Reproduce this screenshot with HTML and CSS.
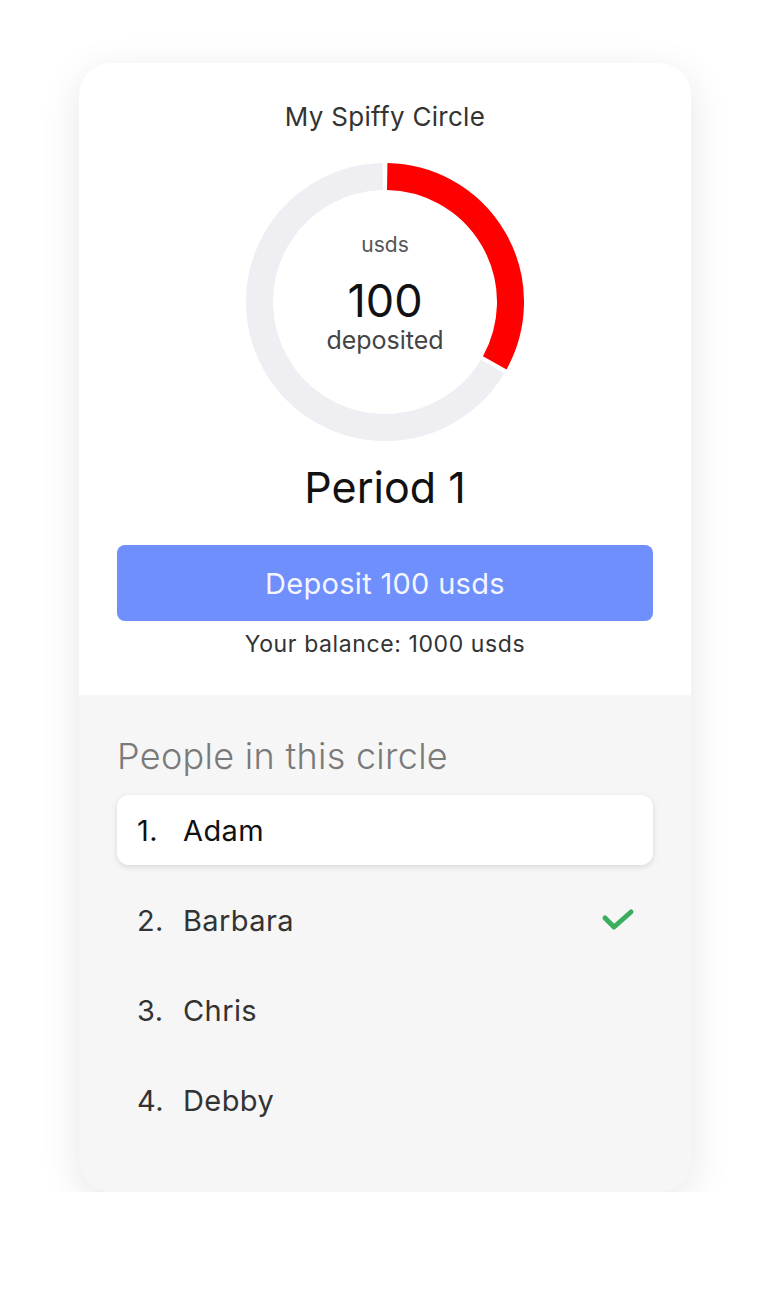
FILE: index.html
```html
<!DOCTYPE html>
<html lang="en">
  <head>
    <meta charset="UTF-8" />
    <meta name="viewport" content="width=device-width, initial-scale=1.0" />
    <title>My Spiffy Circle</title>
    <link rel="stylesheet" href="styles.css">
  </head>
  <body>
    <div class="circle-card">
      <div class="summary">
        <h1 class="circle-name">My Spiffy Circle</h1>
        <div class="donut">
          <svg class="donut-ring" width="278" height="278" viewBox="0 0 278 278">
            <path d="M 246.58 203.64 A 125.5 125.5 0 1 1 136.81 13.52" fill="none" stroke="#eeeef3" stroke-width="27" />
            <path d="M 141.19 13.52 A 125.5 125.5 0 0 1 248.77 199.84" fill="none" stroke="#ff0000" stroke-width="27" />
          </svg>
          <div class="donut-label">
            <span class="donut-unit">usds</span>
            <span class="donut-amount">100</span>
            <span class="donut-caption">deposited</span>
          </div>
        </div>
        <h2 class="period">Period 1</h2>
        <button class="deposit-button">Deposit 100 usds</button>
        <div class="balance">Your balance: 1000 usds</div>
      </div>
      <div class="people">
        <h3 class="people-title">People in this circle</h3>
        <ul class="people-list">
          <li class="person current">
            <span class="person-num">1.</span>
            <span class="person-name">Adam</span>
          </li>
          <li class="person">
            <span class="person-num">2.</span>
            <span class="person-name">Barbara</span>
            <svg class="check" width="34" height="24" viewBox="0 0 34 24">
              <path d="M 4 10 L 13 19 L 30 4" fill="none" stroke="#3aae5e" stroke-width="5" stroke-linecap="round" stroke-linejoin="round" />
            </svg>
          </li>
          <li class="person">
            <span class="person-num">3.</span>
            <span class="person-name">Chris</span>
          </li>
          <li class="person">
            <span class="person-num">4.</span>
            <span class="person-name">Debby</span>
          </li>
        </ul>
      </div>
    </div>
  </body>
</html>
```

FILE: styles.css
```css
body {
  font-family: "Inter", "Helvetica Neue", Arial, sans-serif;
  background-color: #fff;
  color: #222;
  margin: 0;
  padding: 63px 0 0 79px;
}

.circle-card {
  width: 612px;
  border-radius: 32px;
  overflow: hidden;
  background-color: #f6f6f6;
  box-shadow: 0 10px 40px rgba(0, 0, 0, 0.1);
}

.summary {
  background-color: #fff;
  padding: 39px 38px 39px;
  display: flex;
  flex-direction: column;
  align-items: center;
}

.circle-name {
  margin: 0 0 31px;
  font-size: 26px;
  line-height: 30px;
  font-weight: 400;
  letter-spacing: 0.3px;
  color: #333;
}

.donut {
  width: 278px;
  height: 278px;
  display: grid;
  place-items: center;
}

.donut-ring,
.donut-label {
  grid-area: 1 / 1;
}

.donut-label {
  display: flex;
  flex-direction: column;
  align-items: center;
  margin-top: -18px;
}

.donut-unit {
  font-size: 21px;
  line-height: 24px;
  color: #555;
  margin-bottom: 19px;
}

.donut-amount {
  font-size: 45px;
  line-height: 50px;
  color: #111;
}

.donut-caption {
  font-size: 25px;
  line-height: 28px;
  color: #444;
}

.period {
  margin: 22px 0 34px;
  font-size: 43px;
  line-height: 48px;
  font-weight: 400;
  color: #111;
}

.deposit-button {
  width: 536px;
  height: 76px;
  border: none;
  border-radius: 8px;
  background-color: #6f8ffd;
  color: #f4f6ff;
  font-family: inherit;
  font-size: 29px;
  letter-spacing: 0.3px;
  cursor: pointer;
}

.balance {
  margin-top: 11px;
  font-size: 23px;
  line-height: 24px;
  letter-spacing: 0.6px;
  color: #333;
}

.people {
  padding: 41px 38px 57px;
}

.people-title {
  margin: 0 0 19px;
  font-size: 36px;
  line-height: 40px;
  font-weight: 300;
  letter-spacing: 0.3px;
  color: #7a7a7a;
}

.people-list {
  list-style: none;
  margin: 0;
  padding: 0;
  display: flex;
  flex-direction: column;
  gap: 20px;
}

.person {
  height: 70px;
  display: flex;
  align-items: center;
  padding: 0 20px;
  font-size: 29px;
  letter-spacing: 0.4px;
  color: #333;
  border-radius: 12px;
}

.person.current {
  background-color: #fff;
  color: #111;
  box-shadow: 0 2px 6px rgba(0, 0, 0, 0.12);
}

.person-num {
  width: 46px;
}

.person-name {
  flex: 1;
}

.check {
  margin-right: -2px;
}
```
